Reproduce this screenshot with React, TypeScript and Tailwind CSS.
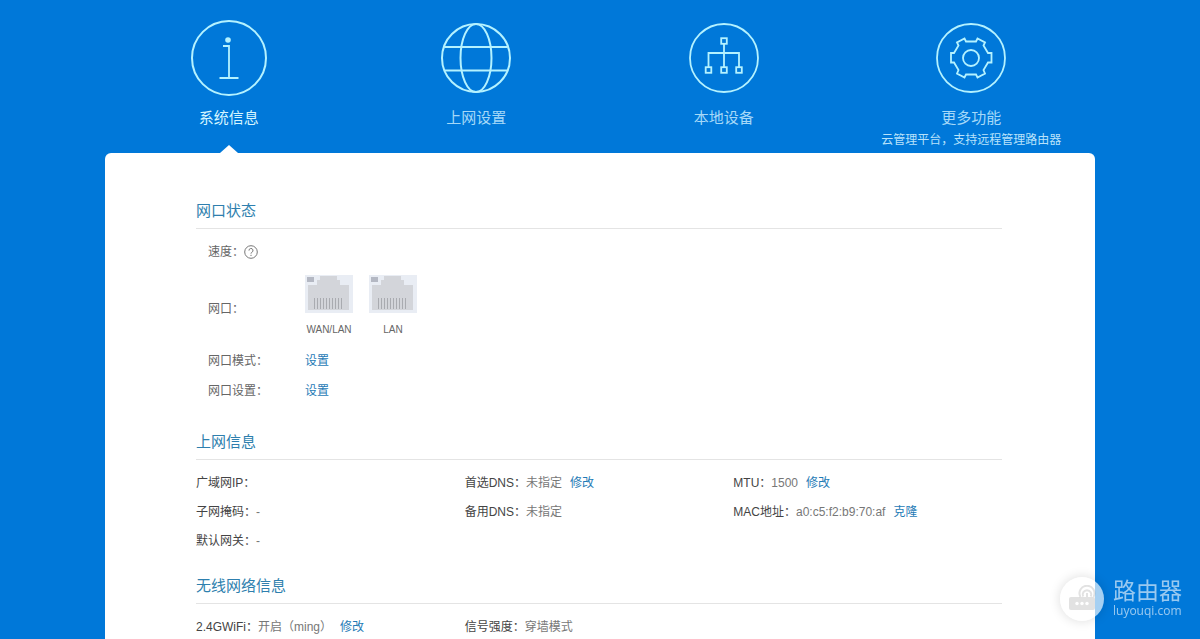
import React from 'react';

const fontStack = 'font-["Liberation_Sans","Noto_Sans_CJK_SC",sans-serif]';

const InfoIcon = () => (
  <svg width="76" height="76" viewBox="0 0 76 76" fill="none" stroke="currentColor" strokeWidth="2" aria-hidden="true">
    <circle cx="38" cy="38" r="37" />
    <circle cx="37" cy="20" r="2.8" fill="currentColor" stroke="none" />
    <path d="M32 26H38V58M28.500 58H47.500" strokeWidth="1.8" />
  </svg>
);

const GlobeIcon = () => (
  <svg width="70" height="70" viewBox="0 0 70 70" fill="none" stroke="currentColor" strokeWidth="2" aria-hidden="true">
    <circle cx="35" cy="35" r="34" />
    <ellipse cx="35" cy="35" rx="15.5" ry="34" />
    <path d="M3.500 24H66.500M3.500 47.500H66.500" />
  </svg>
);

const DevicesIcon = () => (
  <svg width="70" height="70" viewBox="0 0 70 70" fill="none" stroke="currentColor" strokeWidth="1.8" aria-hidden="true">
    <circle cx="35" cy="35" r="34" />
    <rect x="32.2" y="15.2" width="5.6" height="5.6" />
    <rect x="16.7" y="44.2" width="5.6" height="5.6" />
    <rect x="32.2" y="44.2" width="5.6" height="5.6" />
    <rect x="47.2" y="44.2" width="5.6" height="5.6" />
    <path d="M35 21V44M19.5 44V30H50V44" />
  </svg>
);

const GearIcon = () => (
  <svg width="70" height="70" viewBox="0 0 70 70" fill="none" stroke="currentColor" strokeWidth="1.8" aria-hidden="true">
    <circle cx="35" cy="35" r="34" />
    <circle cx="35" cy="35" r="8" />
    <path d="M30 18.500H40L41.500 15.500L49 19.500L47.500 22.500L52 30H55.500V39.500H52L47.500 47L49 50.500L41.500 54.500L40 51.500H30L28.500 54.500L21 50.500L22.500 47L18 39.500H15V30H18L22.500 22.500L21 19.500L28.500 15.500Z" />
  </svg>
);

const PortIcon = () => (
  <svg width="48" height="38" viewBox="0 0 48 38" aria-hidden="true">
    <rect width="48" height="38" fill="#e9edf4" />
    <path d="M3 35V10H12V5H15V1H32V5H35V10H44V35Z" fill="#d3d5da" />
    <rect x="2" y="2" width="7" height="5" fill="#b4b8c3" />
    <path d="M9.5 23V34M12.5 23V34M15.5 23V34M18.5 23V34M21.5 23V34M24.5 23V34M27.5 23V34M30.5 23V34M33.5 23V34M36.5 23V34" stroke="#a9abb0" />
  </svg>
);

const navItems = [
  { id: 'system', label: '系统信息', icon: InfoIcon, active: true },
  { id: 'internet', label: '上网设置', icon: GlobeIcon },
  { id: 'devices', label: '本地设备', icon: DevicesIcon },
  { id: 'more', label: '更多功能', icon: GearIcon, note: '云管理平台，支持远程管理路由器' },
];

const ports = ['WAN/LAN', 'LAN'];

type Item = { label: string; value?: string; action?: string };

const internetInfo: Item[] = [
  { label: '广域网IP：' },
  { label: '首选DNS：', value: '未指定', action: '修改' },
  { label: 'MTU：', value: '1500', action: '修改' },
  { label: '子网掩码：', value: '-' },
  { label: '备用DNS：', value: '未指定' },
  { label: 'MAC地址：', value: 'a0:c5:f2:b9:70:af', action: '克隆' },
  { label: '默认网关：', value: '-' },
];

const wifiInfo: Item[] = [
  { label: '2.4GWiFi：', value: '开启（ming）', action: '修改' },
  { label: '信号强度：', value: '穿墙模式' },
];

const SectionTitle = ({ children }: { children: React.ReactNode }) => (
  <h2 className="border-b border-[#e4e4e4] pb-[7px] text-[15px] leading-5 text-[#2e7fae]">{children}</h2>
);

const ActionLink = ({ children }: { children: React.ReactNode }) => (
  <a href="#" className="text-[#1f7bb6] hover:underline">{children}</a>
);

const InfoGrid = ({ items }: { items: Item[] }) => (
  <dl className="mt-[9px] grid grid-cols-3 leading-[29px]">
    {items.map((item) => (
      <div key={item.label} className="flex whitespace-nowrap">
        <dt className="text-[#444]">{item.label}</dt>
        <dd className="flex gap-2 text-[#777]">
          {item.value}
          {item.action && <ActionLink>{item.action}</ActionLink>}
        </dd>
      </div>
    ))}
  </dl>
);

const Watermark = () => (
  <div className="pointer-events-none fixed right-[18px] bottom-[18px] flex items-center gap-[9px]">
    <div className="flex size-11 items-center justify-center rounded-full bg-white/65 shadow-[0_0_12px_rgba(0,0,0,0.14)]">
      <svg width="28" height="28" viewBox="0 0 28 28" fill="none" aria-hidden="true">
        <rect x="1" y="12" width="26" height="13" rx="2" fill="#8a8a8a" fillOpacity="0.25" />
        <g stroke="#8a8a8a" strokeOpacity="0.25" strokeWidth="2">
          <path d="M19 12V8" />
          <path d="M15.200 11.500A4.300 4.300 0 1 1 22.800 11.500" />
          <path d="M12.500 12A7.500 7.500 0 1 1 25.500 12" />
        </g>
        <circle cx="9" cy="18.5" r="1.7" fill="#fff" />
        <circle cx="14" cy="18.5" r="1.7" fill="#fff" />
        <circle cx="19" cy="18.5" r="1.7" fill="#fff" />
      </svg>
    </div>
    <div className="text-white/60">
      <p className="text-[23px] leading-6">路由器</p>
      <p className="font-['Open_Sans',sans-serif] text-[12px] leading-4">luyouqi.com</p>
    </div>
  </div>
);

const App = () => {
  return (
    <div className={`h-screen overflow-hidden bg-[#0078d9] text-xs ${fontStack}`}>
      <div className="mx-auto flex h-full max-w-[990px] flex-col">
        <nav className="grid h-[153px] shrink-0 grid-cols-4 pt-5">
          {navItems.map(({ id, label, icon: Icon, active, note }) => (
            <a
              key={id}
              href={`#${id}`}
              aria-current={active ? 'page' : undefined}
              className="relative flex flex-col items-center whitespace-nowrap text-[#a5d8f8]"
            >
              <span className="flex h-[76px] items-center text-[#b4f2ff]">
                <Icon />
              </span>
              <span className={`mt-3 text-[15px] leading-5 ${active ? 'text-[#d5f5ff]' : ''}`}>{label}</span>
              {note && <span className="mt-1 leading-4 text-[#b8e2fb]">{note}</span>}
              {active && (
                <span className="absolute bottom-0 border-x-[9px] border-b-[8px] border-x-transparent border-b-white" />
              )}
            </a>
          ))}
        </nav>

        <main className="flex-1 rounded-t-md bg-white pt-12 pr-[93px] pl-[91px]">
          <section>
            <SectionTitle>网口状态</SectionTitle>
            <div className="mt-2 pl-3 leading-[30px] text-[#666]">
              <div className="flex items-center">
                <span>速度：</span>
                <button type="button" aria-label="帮助" className="text-[#777]">
                  <svg width="14" height="14" viewBox="0 0 14 14" fill="none" stroke="currentColor" aria-hidden="true">
                    <circle cx="7" cy="7" r="6.3" />
                    <path d="M5 5.600A2 2 0 1 1 7.800 7.300Q7 7.700 7 8.600M7 9.800V11" />
                  </svg>
                </button>
              </div>
              <div className="mt-1 flex items-center">
                <span className="w-[97px]">网口：</span>
                <ul className="flex gap-4 pt-1 pb-2">
                  {ports.map((port) => (
                    <li key={port} className="flex w-12 flex-col items-center gap-[9px] text-[10px] leading-4">
                      <PortIcon />
                      {port}
                    </li>
                  ))}
                </ul>
              </div>
              <div className="flex">
                <span className="w-[97px]">网口模式：</span>
                <ActionLink>设置</ActionLink>
              </div>
              <div className="flex">
                <span className="w-[97px]">网口设置：</span>
                <ActionLink>设置</ActionLink>
              </div>
            </div>
          </section>

          <section className="mt-[26px]">
            <SectionTitle>上网信息</SectionTitle>
            <InfoGrid items={internetInfo} />
          </section>

          <section className="mt-5">
            <SectionTitle>无线网络信息</SectionTitle>
            <InfoGrid items={wifiInfo} />
          </section>
        </main>
      </div>

      <Watermark />
    </div>
  );
};

export default App;
